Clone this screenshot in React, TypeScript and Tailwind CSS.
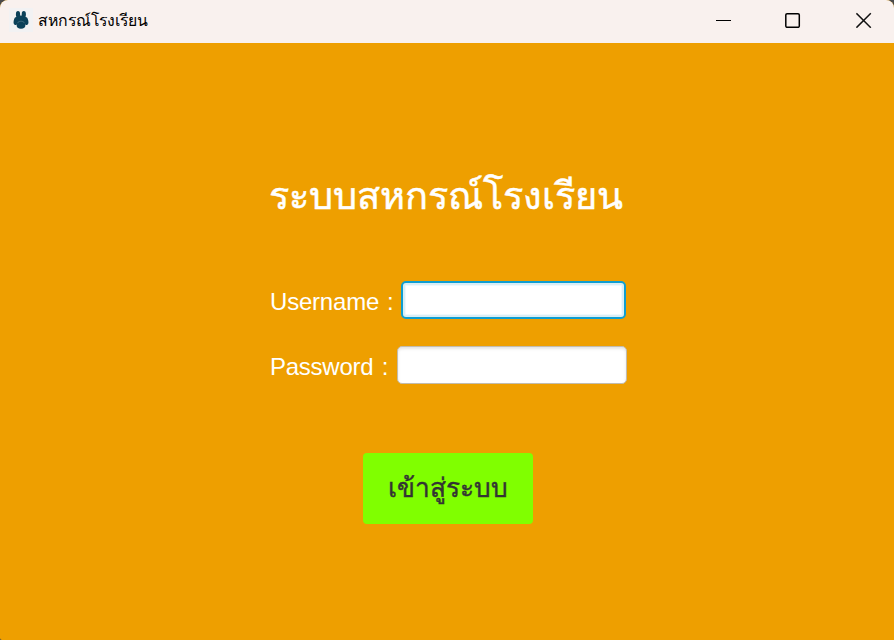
function PawIcon() {
  return (
    <svg width="24" height="24" viewBox="0 0 24 24" className="shrink-0">
      <rect width="24" height="24" fill="#f2f2f3" />
      <g fill="#0b4159">
        <ellipse cx="9" cy="6.4" rx="2.1" ry="3.3" />
        <ellipse cx="14.800" cy="6.4" rx="2.1" ry="3.3" />
        <path d="M8 7.5h8l1 7H7z" />
        <ellipse cx="7" cy="13" rx="2.3" ry="4" transform="rotate(12 7 13)" />
        <ellipse cx="17" cy="13" rx="2.3" ry="4" transform="rotate(-12 17 13)" />
        <ellipse cx="12" cy="17" rx="4.4" ry="3.8" />
      </g>
      <path d="M8.400 15.200c.6-1.300 2-2 3.600-2s3 .7 3.600 2" stroke="#6f919f" strokeWidth=".5" fill="none" />
    </svg>
  );
}

export default function App() {
  return (
    <div className="flex h-[640px] w-[894px] flex-col overflow-hidden bg-[#4a4a4a] font-['Liberation_Sans',sans-serif]">
      <div className="flex min-h-0 flex-1 flex-col overflow-hidden rounded-t-lg rounded-bl-[2px] bg-[#ee9f00]">
        <header className="flex h-[43px] shrink-0 items-center bg-[#f9f1ee] pb-[3px] pl-[9px]">
          <PawIcon />
          <span className="ml-[5px] pt-[2px] text-[15.8px] leading-6 text-black">สหกรณ์โรงเรียน</span>
          <div className="ml-auto flex items-center pr-[22px]">
            <svg width="16" height="16" viewBox="0 0 16 16" className="mr-[53px]">
              <path d="M0 8.5h15" stroke="#000" />
            </svg>
            <svg width="16" height="16" viewBox="0 0 16 16" fill="none" className="mr-[55px]">
              <rect x=".8" y="1.8" width="13.5" height="13.5" rx="1.3" stroke="#000" strokeWidth="1.5" />
            </svg>
            <svg width="16" height="16" viewBox="0 0 16 16" fill="none">
              <path d="M.4 1.3l14.4 14.4M14.8 1.3L.4 15.7" stroke="#111" strokeWidth="1.5" />
            </svg>
          </div>
        </header>
        <main className="flex flex-col pl-[269px] pt-[123px]">
          <h1 className="h-[60px] whitespace-nowrap text-[38px] leading-[60px] text-white [-webkit-text-stroke:0.5px_white]">
            ระบบสหกรณ์โรงเรียน
          </h1>
          <label className="mt-[54px] flex h-[40px] w-[358px] items-center justify-between text-[24px] text-white">
            <span className="whitespace-pre pl-px pt-[3px] tracking-[-0.2px] [word-spacing:1.5px]">Username :</span>
            <input className="mr-px h-[38px] w-[225px] shrink-0 rounded-[5px] border-2 border-[#0f9ed0] bg-white shadow-[inset_0_0_0_2px_#d9eef6,inset_0_0_1px_3px_#eff8fb] outline-none" />
          </label>
          <label className="mt-[25px] flex h-[40px] w-[358px] items-center justify-between text-[24px] text-white">
            <span className="whitespace-pre pl-px pt-[3px] tracking-[-0.25px] [word-spacing:2px]">Password :</span>
            <input
              type="password"
              className="h-[38px] w-[230px] shrink-0 rounded-[5px] border border-[#c2bcae] bg-white shadow-[inset_0_2px_3px_#e4e4e4] outline-none"
            />
          </label>
          <button className="ml-[94px] mt-[68px] h-[71px] w-[170px] rounded-[4px] bg-[#80ff00] text-[26.3px] text-[#333] [-webkit-text-stroke:0.4px_#333]">
            เข้าสู่ระบบ
          </button>
        </main>
      </div>
    </div>
  );
}
